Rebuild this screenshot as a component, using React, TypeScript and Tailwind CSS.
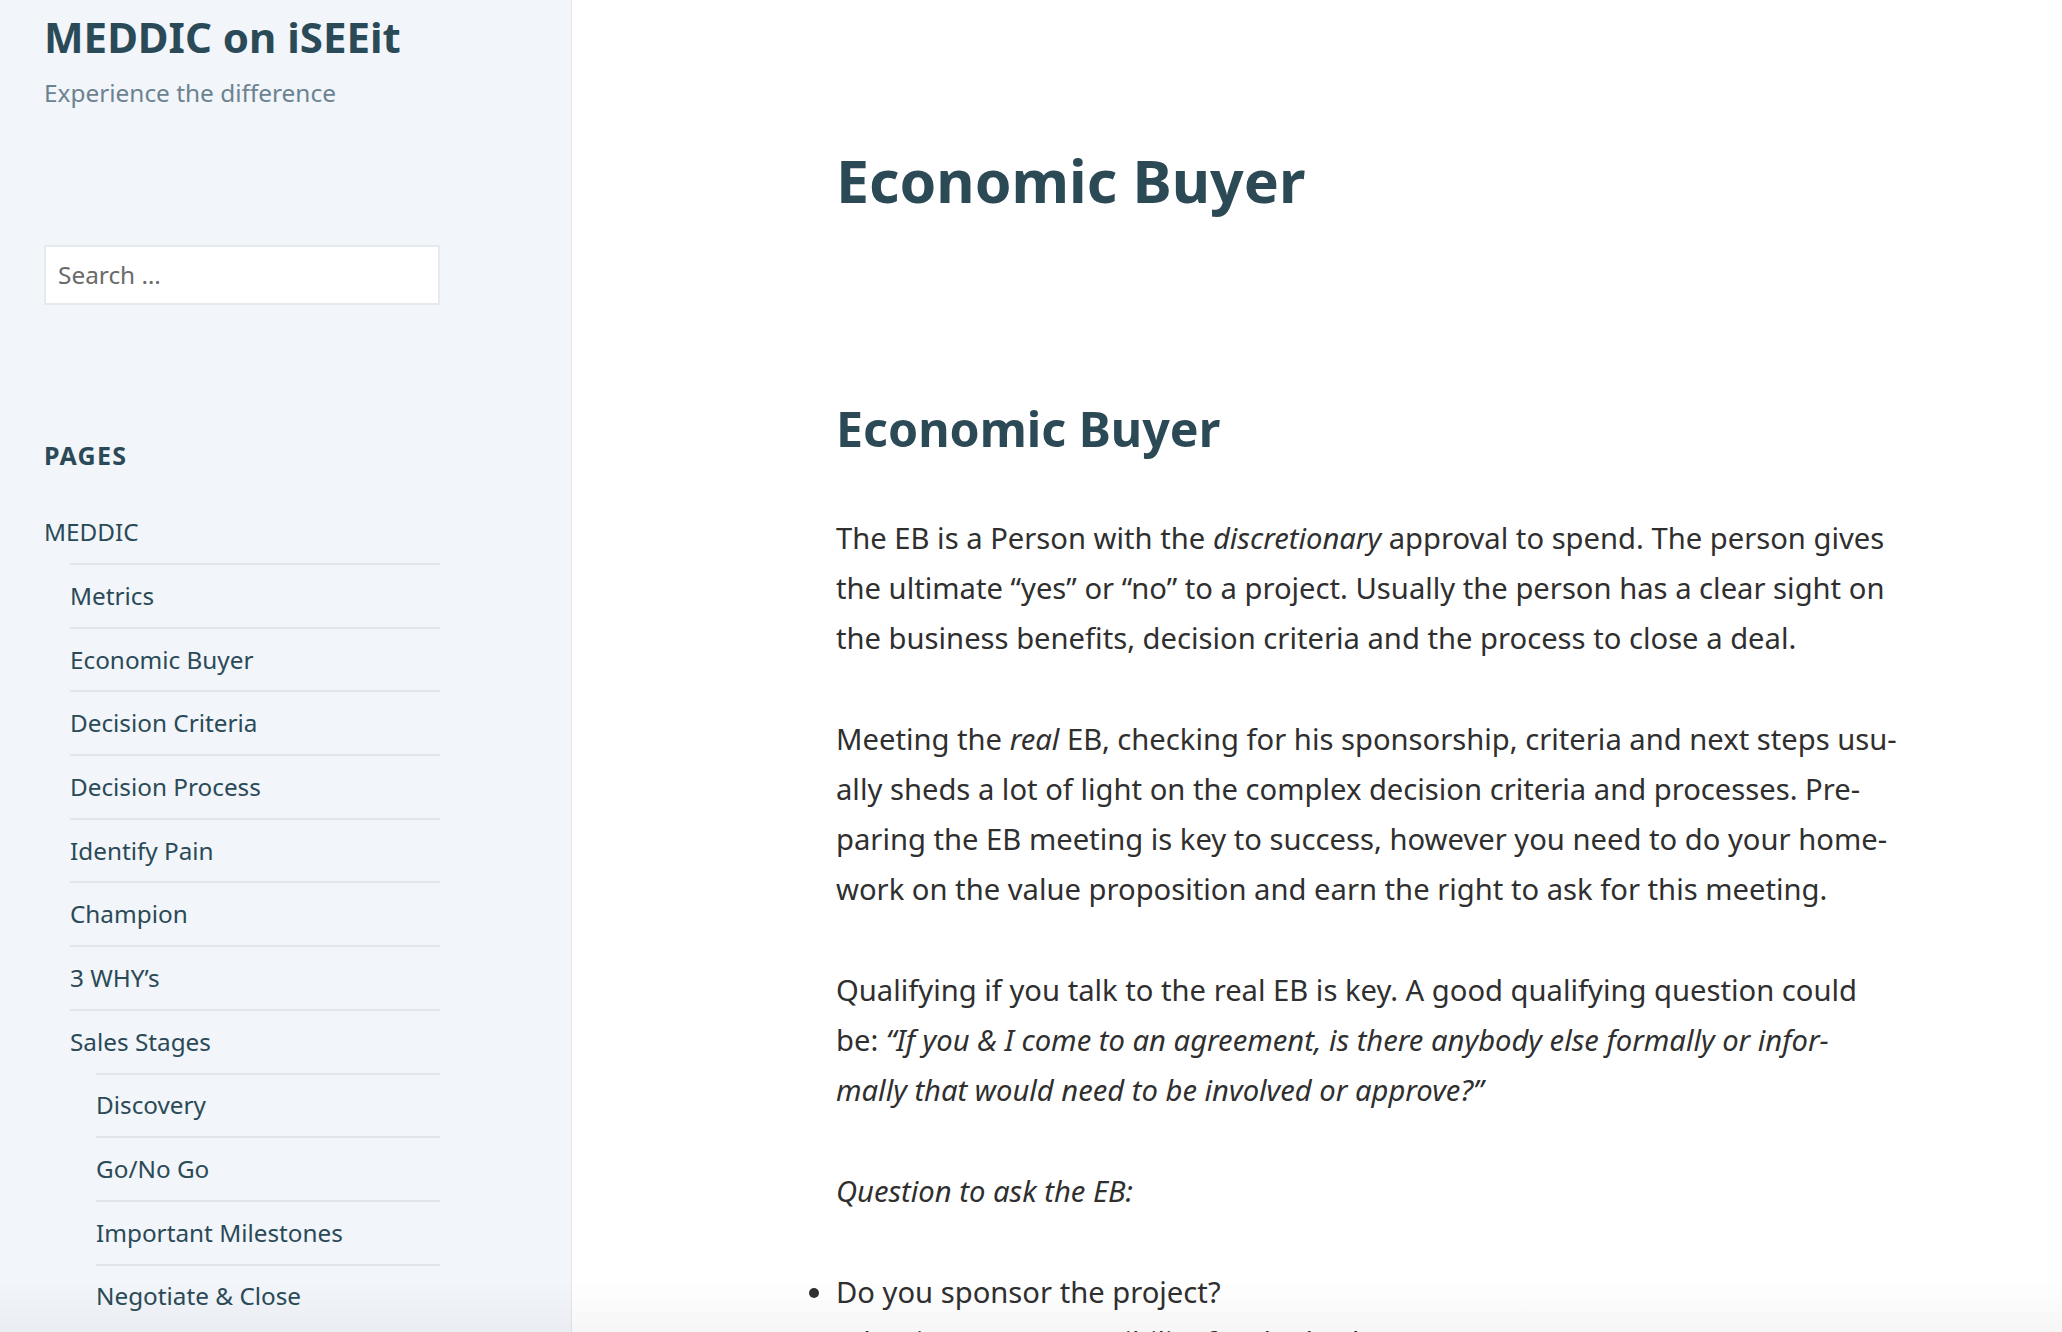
import React from "react";

const font = "font-['Noto_Sans','Liberation_Sans',sans-serif]";

type NavItem = { label: string; children?: NavItem[] };

const pages: NavItem[] = [
  {
    label: "MEDDIC",
    children: [
      { label: "Metrics" },
      { label: "Economic Buyer" },
      { label: "Decision Criteria" },
      { label: "Decision Process" },
      { label: "Identify Pain" },
      { label: "Champion" },
      { label: "3 WHY’s" },
      {
        label: "Sales Stages",
        children: [
          { label: "Discovery" },
          { label: "Go/No Go" },
          { label: "Important Milestones" },
          { label: "Negotiate & Close" },
        ],
      },
    ],
  },
];

const NavList = ({ items, nested }: { items: NavItem[]; nested?: boolean }) => (
  <ul className={nested ? "ml-[26px]" : ""}>
    {items.map((item) => (
      <li key={item.label}>
        <a
          href="#"
          className={`block text-[24.3px] leading-[36px] text-[#2b4a57] ${
            nested
              ? "border-t-2 border-[#e1e6eb] py-[12.85px]"
              : "pt-[15px] pb-[13px]"
          }`}
        >
          {item.label}
        </a>
        {item.children && <NavList items={item.children} nested />}
      </li>
    ))}
  </ul>
);

const Sidebar = () => (
  <aside className="w-[572px] shrink-0 border-r border-[#e4e8ed] bg-[#f2f5fa] pl-[44px] pt-[10px]">
    <div className="w-[396px]">
      {/* Branding */}
      <h1 className="text-[42px] font-bold leading-[53px] text-[#2b4a57]">
        MEDDIC on iSEEit
      </h1>
      <p className="mt-[12px] text-[24.4px] leading-[36px] text-[#6b8390]">
        Experience the difference
      </p>

      {/* Search */}
      <div className="mt-[134px] flex h-[60px] items-center border-2 border-[#e6eaee] bg-white px-[12px]">
        <span className="text-[24.4px] text-[#6a6a6a]">Search …</span>
      </div>

      {/* Pages widget */}
      <h2 className="mt-[135px] text-[25px] font-bold uppercase leading-[30px] tracking-[0.05em] text-[#2b4a57]">
        Pages
      </h2>
      <nav className="mt-[29px]">
        <NavList items={pages} />
      </nav>
    </div>
  </aside>
);

const Article = () => (
  <main className="flex-1 bg-white pl-[264px] pt-[144px] text-[#2f2f2f]">
    <h1 className="text-[59px] font-bold leading-[72px] text-[#2c4a56]">
      Economic Buyer
    </h1>

    <div className="mt-[182px] w-[1100px]">
      <h2 className="text-[48.3px] font-bold leading-[60px] text-[#2c4a56]">
        Economic Buyer
      </h2>

      <div className="mt-[55px] space-y-[51px] whitespace-nowrap text-[29.2px] leading-[50px]">
        <p>
          The EB is a Person with the <em>discretionary</em> approval to spend. The person gives
          <br />
          the ultimate “yes” or “no” to a project. Usually the person has a clear sight on
          <br />
          the business benefits, decision criteria and the process to close a deal.
        </p>
        <p>
          Meeting the <em>real</em> EB, checking for his sponsorship, criteria and next steps usu-
          <br />
          ally sheds a lot of light on the complex decision criteria and processes. Pre-
          <br />
          paring the EB meeting is key to success, however you need to do your home-
          <br />
          work on the value proposition and earn the right to ask for this meeting.
        </p>
        <p>
          Qualifying if you talk to the real EB is key. A good qualifying question could
          <br />
          be: <em>“If you &amp; I come to an agreement, is there anybody else formally or infor-</em>
          <br />
          <em>mally that would need to be involved or approve?”</em>
        </p>
        <p>
          <em>Question to ask the EB:</em>
        </p>
        <ul className="list-outside list-disc marker:text-[#2f2f2f]">
          <li>Do you sponsor the project?</li>
          <li>What is your responsibility for the budget?</li>
        </ul>
      </div>
    </div>
  </main>
);

const App = () => {
  return (
    <div className={`${font} relative flex h-[1332px] w-full overflow-hidden bg-white`}>
      <Sidebar />
      <Article />
      {/* Bottom fade */}
      <div className="pointer-events-none absolute inset-x-0 bottom-0 h-[52px] bg-linear-to-b from-transparent to-black/[0.035]" />
    </div>
  );
};

export default App;
